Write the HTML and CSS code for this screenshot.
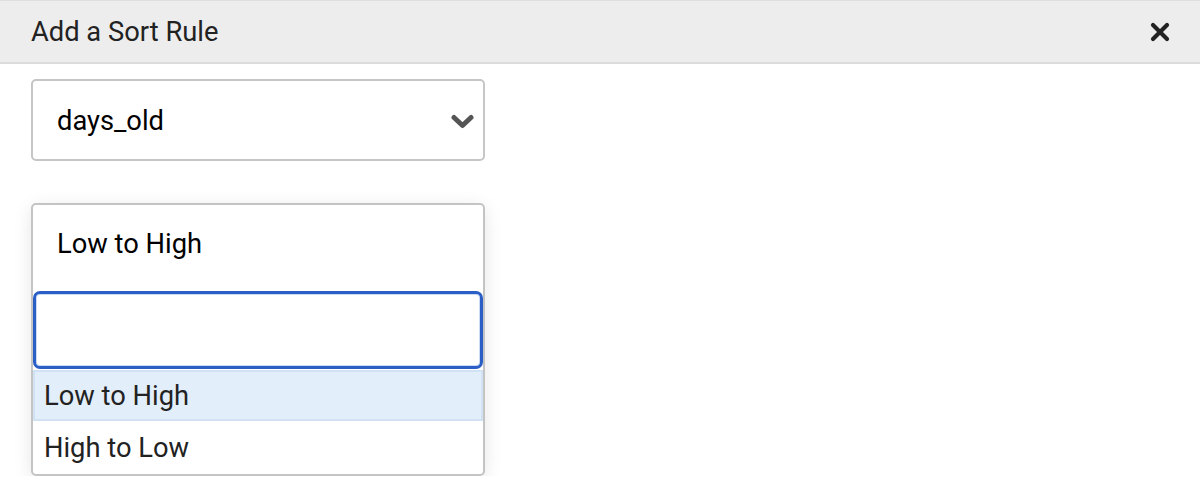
FILE: index.html
```html
<!DOCTYPE html>
<html lang="en">
<head>
    <meta charset="UTF-8">
    <title>Add a Sort Rule</title>
    <link rel="stylesheet" href="styles.css">
</head>
<body>
    <!-- Modal header -->
    <header class="modal-header">
        <h1 class="modal-title">Add a Sort Rule</h1>
        <button class="close-btn" aria-label="Close">
            <svg width="20" height="20" viewBox="0 0 20 20">
                <path d="M3 3 L17 17 M17 3 L3 17" stroke="#222" stroke-width="4.2" stroke-linecap="round" fill="none"/>
            </svg>
        </button>
    </header>

    <!-- Modal body -->
    <main class="modal-body">
        <div class="select-box">
            <span class="select-value">days_old</span>
            <svg class="chevron" width="23" height="15" viewBox="0 0 23 15">
                <path d="M3 3.5 L11.5 11.5 L20 3.5" stroke="#555" stroke-width="5" stroke-linecap="round" stroke-linejoin="round" fill="none"/>
            </svg>
        </div>

        <div class="dropdown">
            <div class="dropdown-current">Low to High</div>
            <input class="dropdown-search" type="text">
            <ul class="options">
                <li class="option active">Low to High</li>
                <li class="option">High to Low</li>
            </ul>
        </div>
    </main>
</body>
</html>
```

FILE: styles.css
```css
/* General styles */
body {
    margin: 0;
    padding: 0;
    font-family: Roboto, "Liberation Sans", sans-serif;
    background: #fff;
    color: #000;
}

/* Header */
.modal-header {
    display: flex;
    align-items: center;
    justify-content: space-between;
    height: 64px;
    box-sizing: border-box;
    padding: 0 30px 0 31px;
    background: #ededed;
    border-top: 1px solid #dedede;
    border-bottom: 2px solid #dcdcdc;
}

.modal-title {
    margin: 0;
    font-size: 27.3px;
    font-weight: 400;
    color: #222;
}

.close-btn {
    display: flex;
    padding: 0;
    border: none;
    background: none;
    cursor: pointer;
}

/* Body */
.modal-body {
    padding: 15px 31px 0;
}

.select-box {
    display: flex;
    align-items: center;
    justify-content: space-between;
    width: 454px;
    height: 82px;
    box-sizing: border-box;
    padding: 2px 9px 0 24px;
    border: 2px solid #c6c6c6;
    border-radius: 5px;
    font-size: 27.3px;
}

/* Dropdown */
.dropdown {
    width: 454px;
    margin-top: 42px;
    box-sizing: border-box;
    border: 2px solid #c4c4c4;
    border-radius: 5px;
    background: #fff;
    box-shadow: 0 4px 18px rgba(0, 0, 0, 0.1);
}

.dropdown-current {
    display: flex;
    align-items: center;
    height: 84px;
    box-sizing: border-box;
    padding: 0 0 6px 24px;
    font-size: 27.3px;
}

.dropdown-search {
    display: block;
    width: 100%;
    height: 78px;
    box-sizing: border-box;
    margin: 2px 0 1px;
    border: 3px solid #2b5fc6;
    border-radius: 7px;
    box-shadow: inset 0 0 0 1px #c9dbf5;
    outline: none;
    font-family: inherit;
    font-size: 27px;
}

.options {
    list-style: none;
    margin: 0;
    padding: 0;
}

.option {
    display: flex;
    align-items: center;
    height: 51px;
    box-sizing: border-box;
    padding-left: 9px;
    border: 2px solid transparent;
    font-size: 27.3px;
    color: #222;
}

.option + .option {
    height: 53px;
}

.option.active {
    background: #e2eef9;
    border-color: #d0e2f4;
}
```
